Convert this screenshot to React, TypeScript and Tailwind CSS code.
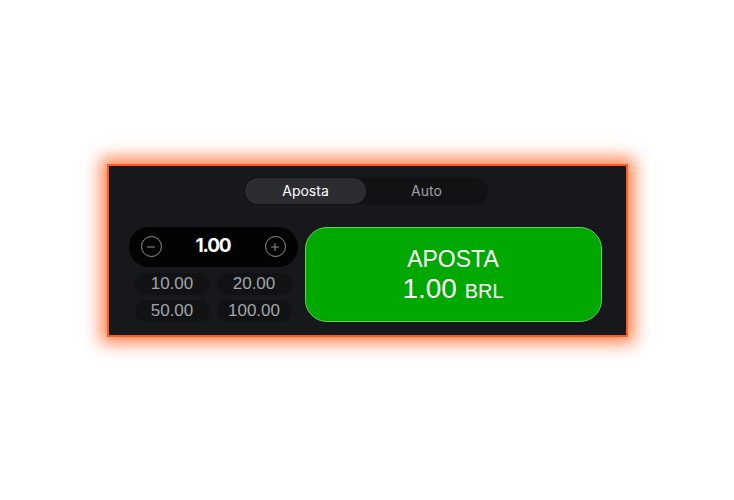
import { Minus, Plus } from 'lucide-react';

const quick = ['10.00', '20.00', '50.00', '100.00'];

export default function App() {
  return (
    <div className="w-[734px] h-[500px] bg-white flex items-center justify-center font-['Inter',sans-serif]">
      <div className="w-[521px] h-[173px] border-2 border-[#ff5a1f] bg-[#17181b] shadow-[0_0_16px_6px_rgba(255,95,30,0.8)] flex flex-col items-center pt-[11px]">
        <div className="flex w-[244px] h-[28px] rounded-full bg-[#111214] p-[1px] ml-[-2px]">
          <div className="w-[121px] rounded-full bg-[#2b2d31] flex items-center justify-center text-[14px] text-white">Aposta</div>
          <div className="flex-1 flex items-center justify-center text-[14px] text-[#9ea1a6]">Auto</div>
        </div>
        <div className="flex w-full pl-[20px] mt-[22px] gap-[7px]">
          <div className="w-[169px] flex flex-col">
            <div className="h-[40px] rounded-full bg-[#030303] flex items-center justify-between px-[12px]">
              <div className="w-[21px] h-[21px] rounded-full border-[1.5px] border-[#8f9296] flex items-center justify-center text-[#8f9296]">
                <Minus size={12} strokeWidth={2} />
              </div>
              <span className="text-white font-bold text-[19px] tracking-[-1.2px]">1.00</span>
              <div className="w-[21px] h-[21px] rounded-full border-[1.5px] border-[#8f9296] flex items-center justify-center text-[#8f9296]">
                <Plus size={12} strokeWidth={2} />
              </div>
            </div>
            <div className="grid grid-cols-2 gap-x-[7px] gap-y-[5px] px-[6px] mt-[6px]">
              {quick.map(q => (
                <div key={q} className="h-[22px] rounded-full bg-[#111214] flex items-center justify-center text-[17px] text-[#a2a5aa] font-['Liberation_Sans',sans-serif]">{q}</div>
              ))}
            </div>
          </div>
          <div className="w-[297px] h-[95px] rounded-[22px] bg-[#00a800] border border-[#5ed35e] flex flex-col items-center justify-center text-white font-['Liberation_Sans',sans-serif] leading-none">
            <span className="text-[23px] mt-[2px]">APOSTA</span>
            <span className="text-[28px] mt-[4px]">1.00 <span className="text-[20px]">BRL</span></span>
          </div>
        </div>
      </div>
    </div>
  );
}
